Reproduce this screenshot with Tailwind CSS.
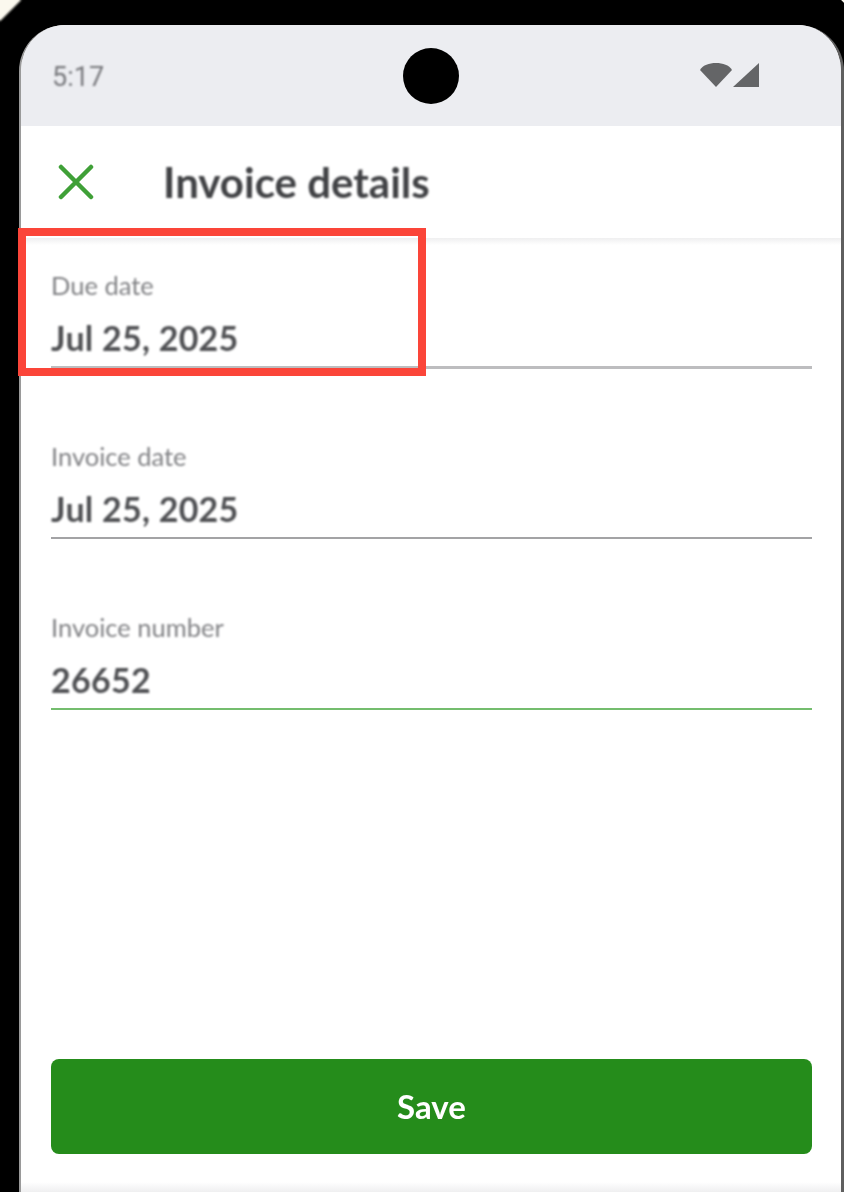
<!DOCTYPE html>
<html lang="en">
<head>
    <meta charset="UTF-8">
    <meta name="viewport" content="width=device-width, initial-scale=1.0">
    <title>Invoice details</title>
    <script src="https://cdn.jsdelivr.net/npm/@tailwindcss/browser@4"></script>
</head>
<body class="bg-black">

<div class="relative w-[844px] h-[1192px] overflow-hidden bg-black pt-[25px] pl-[19px] font-['Lato','Liberation_Sans',sans-serif]">

    <!-- cream corners outside the phone body -->
    <div class="absolute -left-[15px] -top-[15px] w-[30px] h-[30px] rotate-45 bg-[#fbf8ee] blur-[1px]"></div>
    <div class="absolute -right-[2px] -top-[2px] w-[4px] h-[4px] rotate-45 bg-[#fbf8ee] blur-[0.5px]"></div>

    <div class="h-full rounded-t-[46px] bg-white overflow-hidden flex flex-col border-l-2 border-l-[#9a9a9a] border-r-[3px] border-r-[#5f5f5f]">

        <!-- status bar -->
        <div class="h-[101px] shrink-0 bg-[#ecedf1] flex items-center justify-between pl-[31px] pr-[82px]">
            <span class="mt-[3px] text-[27px] text-[#77787c] blur-[0.9px] font-['Roboto',sans-serif]">5:17</span>
            <svg class="blur-[0.6px] mt-[-1px]" width="59" height="26" viewBox="0 0 59 26" fill="#646567">
                <path d="M0 8 C3 3 9 1 16 1 C23 1 29 3 32 8 L16 25 Z"></path>
                <path d="M33 25 L59 1 V25 Z"></path>
            </svg>
        </div>

        <!-- header -->
        <div class="h-[112px] shrink-0 flex items-center pl-[37px] gap-[69px] pb-[1px]">
            <svg class="blur-[0.5px] mt-[1px]" width="36" height="36" viewBox="0 0 36 36" fill="none" stroke="#3fa037" stroke-width="4.5" stroke-linecap="round">
                <path d="M3 3 L33 33 M33 3 L3 33"></path>
            </svg>
            <h1 class="text-[42px] leading-none font-bold text-[#414245] blur-[0.9px]">Invoice details</h1>
        </div>
        <div class="h-[7px] shrink-0 bg-gradient-to-b from-[#efeff0] to-white"></div>

        <!-- fields -->
        <div class="flex flex-col pl-[30px] pr-[29px] pt-[26px] gap-[69px]">
            <div class="h-[98px] flex flex-col border-b-[3px] border-b-[#bdbdbf]">
                <span class="text-[25.5px] leading-[28px] text-[#808184] blur-[0.9px]">Due date</span>
                <span class="mt-[20px] text-[34px] leading-[38px] tracking-[0.25px] font-bold text-[#4f5053] blur-[0.9px]">Jul 25, 2025</span>
            </div>
            <div class="h-[101px] flex flex-col justify-end border-b-2 border-b-[#a3a3a5]">
                <span class="text-[25.5px] leading-[28px] text-[#808184] blur-[0.9px]">Invoice date</span>
                <span class="mt-[20px] mb-[9px] text-[34px] leading-[38px] tracking-[0.25px] font-bold text-[#4f5053] blur-[0.9px]">Jul 25, 2025</span>
            </div>
            <div class="h-[102px] flex flex-col justify-end border-b-2 border-b-[#74bd6e]">
                <span class="text-[25.5px] leading-[28px] text-[#808184] blur-[0.9px]">Invoice number</span>
                <span class="mt-[20px] mb-[9px] text-[34px] leading-[38px] tracking-[0.25px] font-bold text-[#4f5053] blur-[0.9px]">26652</span>
            </div>
        </div>

        <!-- save -->
        <div class="mt-auto pl-[30px] pr-[29px] pb-[28px]">
            <button class="w-full h-[95px] rounded-[8px] bg-[#258c1b] text-white text-[33px] font-bold">
                <span class="block blur-[0.7px]">Save</span>
            </button>
        </div>
        <div class="h-[10px] shrink-0 bg-gradient-to-b from-white to-[#efeff0]"></div>
    </div>

    <!-- camera punch hole -->
    <div class="absolute left-[403px] top-[48px] w-[56px] h-[56px] rounded-full bg-black"></div>

    <!-- highlight box -->
    <div class="absolute left-[18px] top-[228px] w-[408px] h-[148px] border-[8px] border-[#fb4539]"></div>
</div>

</body>
</html>
